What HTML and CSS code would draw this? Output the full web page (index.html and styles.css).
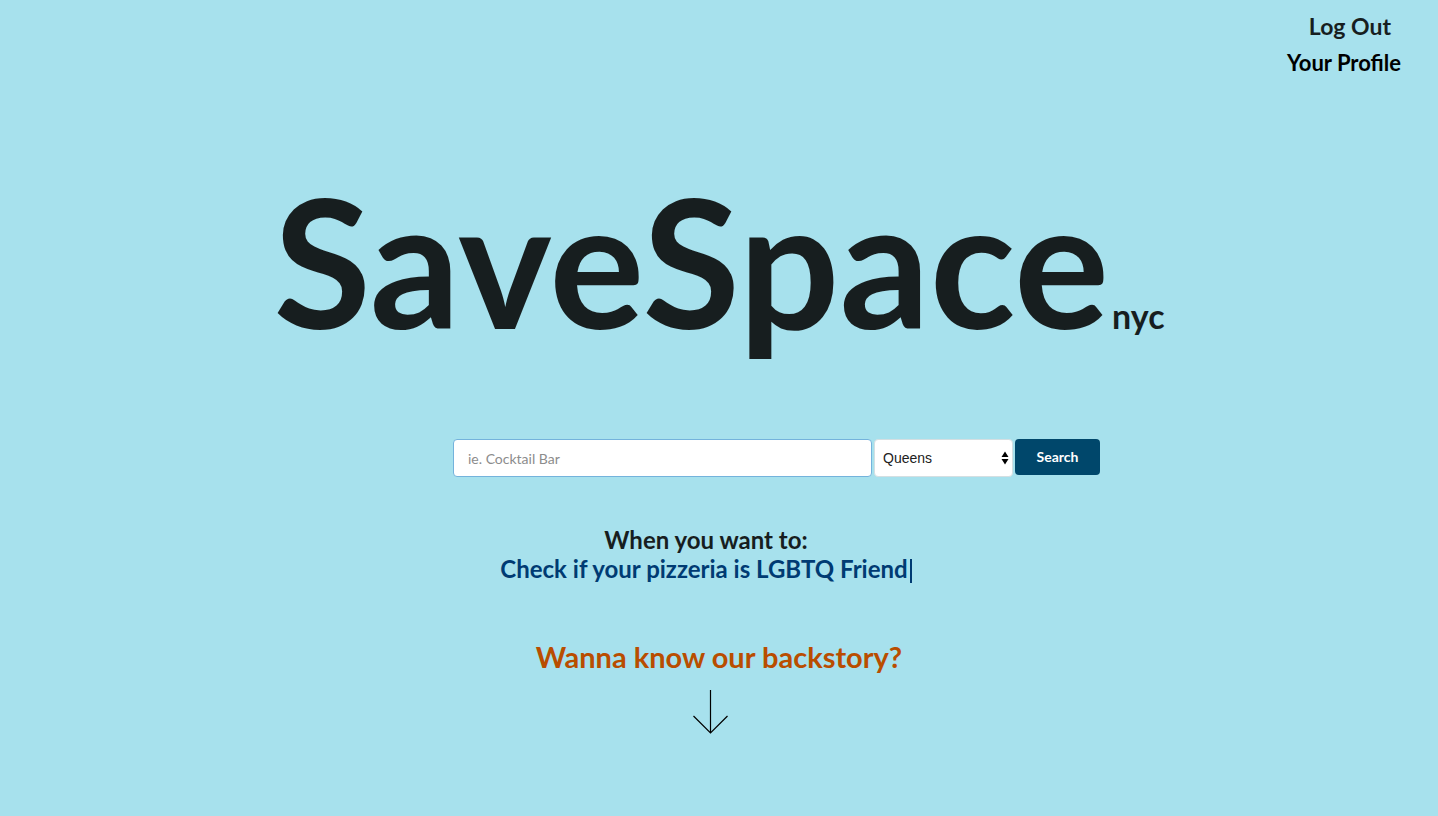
FILE: index.html
```html
<!DOCTYPE html>
<html lang="en">
<head>
<meta charset="utf-8">
<meta name="viewport" content="width=device-width, initial-scale=1">
<title>SaveSpace nyc</title>
<link rel="stylesheet" href="styles.css">
</head>
<body>
<nav class="account">
  <a class="logout" href="#logout">Log Out</a>
  <a class="profile" href="#profile">Your Profile</a>
</nav>
<main class="landing">
  <h1 class="brand">SaveSpace<small class="city">nyc</small></h1>
  <form class="search">
    <input class="term" type="text" aria-label="Search term" placeholder="ie. Cocktail Bar">
    <span class="picker">
      <select class="borough" aria-label="Borough"><option>Queens</option></select>
      <svg class="arrows" viewBox="0 0 8 14" aria-hidden="true"><path d="M4 0.5 7.5 6h-7zM4 13.5.5 8h7z"/></svg>
    </span>
    <button class="submit" type="submit">Search</button>
  </form>
  <section class="pitch">
    <p class="lead">When you want to:</p>
    <p class="typed">Check if your pizzeria is LGBTQ Friend<span class="caret"></span></p>
  </section>
  <a class="backstory" href="#backstory">Wanna know our backstory?
    <svg class="down" viewBox="0 0 36 44" aria-hidden="true"><path d="M17.5 0v43M.5 26l17 17 17-17"/></svg>
  </a>
</main>
</body>
</html>
```
FILE: styles.css
```css
* { box-sizing: border-box; }
body {
  margin: 0;
  min-height: 100vh;
  background: #a7e1ed;
  color: #171e1f;
  font-family: "Avenir Next", Avenir, Lato, sans-serif;
  font-weight: 700;
}
a { color: inherit; text-decoration: none; }
.account {
  display: flex;
  flex-direction: column;
  align-items: flex-end;
  padding: 11px 37px 0 0;
}
.logout { font: 700 23px/30px Lato, sans-serif; padding-right: 10px; }
.profile { color: #000; font-size: 22px; line-height: 30px; margin-top: 7px; }
.landing { display: flex; flex-direction: column; align-items: center; }
.brand {
  display: flex;
  align-items: baseline;
  margin: 77px 0 0;
  font-size: 178px;
  line-height: 210px;
  font-weight: 700;
}
.city { font-size: 34px; line-height: 40px; margin-left: 3px; }
.search { display: flex; gap: 2px; margin: 74px 0 0 115px; }
.term {
  width: 419px;
  height: 38px;
  padding: 0 14px;
  border: 1px solid #74b3dc;
  border-radius: 4px;
  font: 14px Lato, sans-serif;
}
.term::placeholder { color: #8c8c8c; }
.picker { position: relative; width: 139px; }
.borough {
  appearance: none;
  width: 100%;
  height: 38px;
  padding: 0 8px;
  border: 1px solid #d4dfe2;
  border-radius: 4px;
  background: #fff;
  color: #212121;
  font: 14px "Liberation Sans", sans-serif;
}
.arrows { position: absolute; right: 4px; top: 12px; width: 8px; height: 14px; pointer-events: none; }
.submit {
  width: 85px;
  height: 36px;
  padding: 0 0 2px;
  border: 0;
  border-radius: 4px;
  background: #00476b;
  color: #fff;
  font: 700 14px Lato, sans-serif;
}
.pitch { margin: 48px 26px 0 0; font-size: 24px; line-height: 29px; text-align: center; }
.lead, .typed { margin: 0; }
.typed { color: #003b73; }
.caret { display: inline-block; width: 2px; height: 24px; margin-left: 2px; background: currentColor; vertical-align: -5px; }
.backstory {
  display: flex;
  flex-direction: column;
  align-items: center;
  margin-top: 56px;
  color: #b94d00;
  font-size: 29px;
  line-height: 36px;
}
.down { width: 36px; height: 44px; margin: 15px 16px 0 0; fill: none; stroke: #000; stroke-width: 1.2; }
```
